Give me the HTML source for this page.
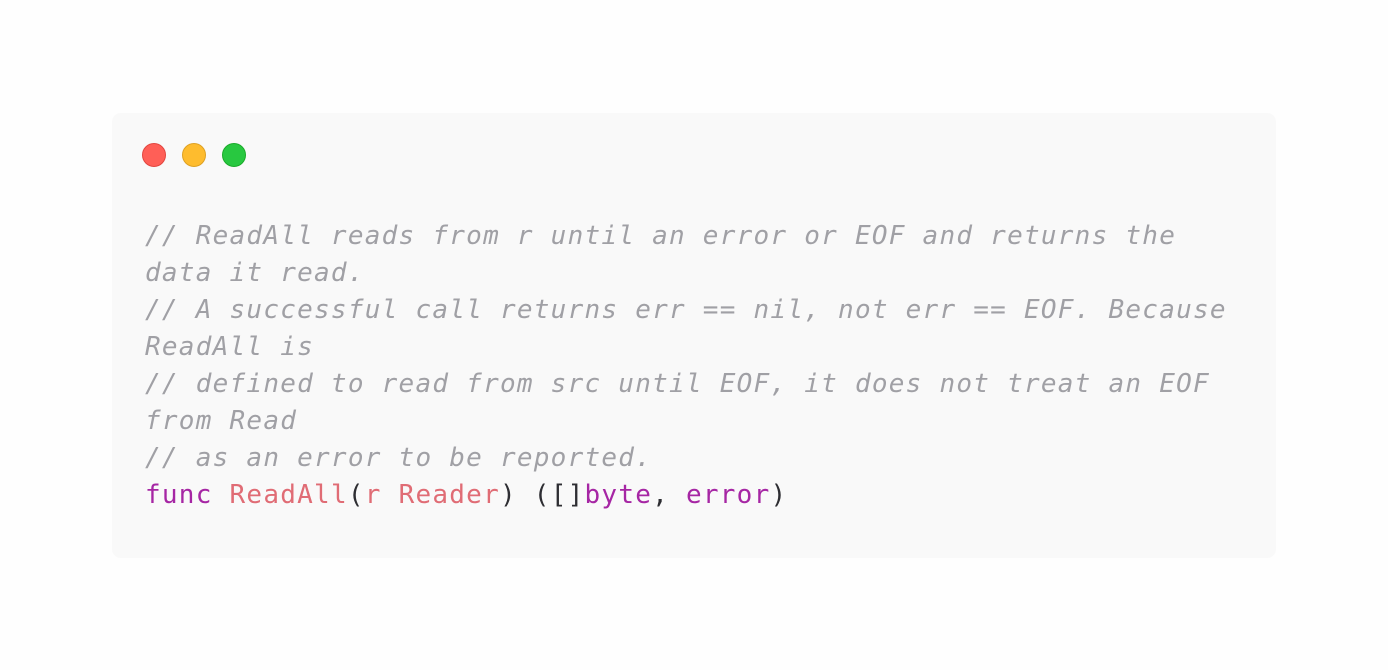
<!DOCTYPE html>
<html><head><meta charset="utf-8"><style>
html,body{margin:0;padding:0;background:#fefefe;width:1388px;height:670px;overflow:hidden}
.card{position:absolute;left:112px;top:113px;width:1164px;height:445px;background:#f9f9f9;border-radius:9px}
.dot{position:absolute;top:143px;width:24px;height:24px;border-radius:50%;box-sizing:border-box}
pre{position:absolute;left:145px;top:218px;margin:0;font-family:"DejaVu Sans Mono",monospace;font-size:26px;letter-spacing:1.25px;line-height:37px;color:#2e2e33}
.c{color:#a0a0a5;font-style:italic}
.k{color:#a626a4}
.f{color:#e06c75}
</style></head><body>
<div class="card"></div>
<div class="dot" style="left:142px;background:#ff5f57;border:1px solid #e2463f"></div>
<div class="dot" style="left:182px;background:#febc2e;border:1px solid #dea123"></div>
<div class="dot" style="left:222px;background:#28c840;border:1px solid #1aab29"></div>
<pre><span class="c">// ReadAll reads from r until an error or EOF and returns the
data it read.
// A successful call returns err == nil, not err == EOF. Because
ReadAll is
// defined to read from src until EOF, it does not treat an EOF
from Read
// as an error to be reported.</span>
<span class="k">func</span> <span class="f">ReadAll</span>(<span class="f">r Reader</span>) ([]<span class="k">byte</span>, <span class="k">error</span>)</pre>
</body></html>
